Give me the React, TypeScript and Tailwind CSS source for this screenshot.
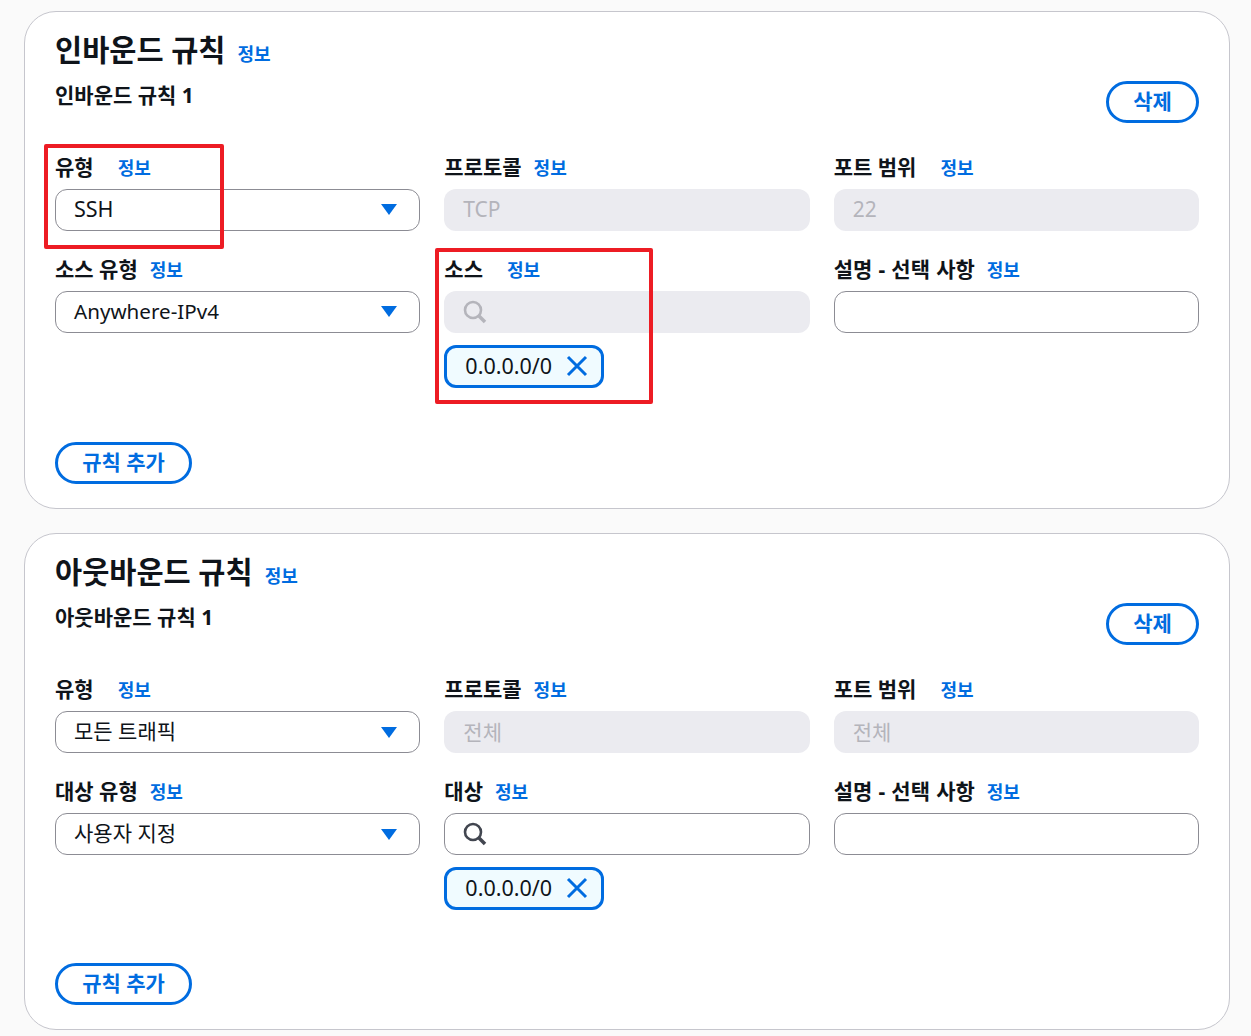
const font = "font-['Noto_Sans','Noto_Sans_CJK_KR',sans-serif]";

function Info() {
  return <a className="text-[18px] leading-[22px] font-semibold text-[#006ce0]">정보</a>;
}

function Label({ text, gap, extra = "" }: { text: string; gap: string; extra?: string }) {
  return (
    <div className={`flex h-[22px] items-center ${gap}`}>
      <span className={`pb-[2px] text-[21px] leading-[22px] font-bold text-[#0f141a] ${extra}`}>{text}</span>
      <Info />
    </div>
  );
}

function SelectBox({ value, size = "text-[21px]" }: { value: string; size?: string }) {
  return (
    <div className={`flex h-[42px] items-center justify-between rounded-[12px] border border-[#8c8c94] bg-white pl-[18px] pr-[21px] text-[#0f141a] ${size}`}>
      <span>{value}</span>
      <svg width="18" height="13" viewBox="0 0 18 13">
        <path d="M1 1h16L9 12z" fill="#006ce0" />
      </svg>
    </div>
  );
}

function DisabledBox({ value, size = "text-[21px] pt-[2px]" }: { value: string; size?: string }) {
  return (
    <div className={`flex h-[42px] items-center rounded-[12px] bg-[#ebebf0] px-[19px] text-[#b4b4bb] ${size}`}>
      {value}
    </div>
  );
}

function SearchIcon() {
  return (
    <svg width="24" height="24" viewBox="0 0 24 24" fill="none" stroke="currentColor" strokeWidth="2.6">
      <circle cx="10" cy="10" r="8" />
      <path d="M15.5 15.5 22 22" strokeWidth="3.6" />
    </svg>
  );
}

function SearchBox({ disabled }: { disabled?: boolean }) {
  return (
    <div
      className={
        disabled
          ? "flex h-[42px] items-center rounded-[12px] bg-[#ebebf0] pl-[19px] text-[#b4b4bb]"
          : "flex h-[42px] items-center rounded-[12px] border border-[#8c8c94] bg-white pl-[18px] text-[#424650]"
      }
    >
      <SearchIcon />
    </div>
  );
}

function Token() {
  return (
    <div className="mt-3 flex h-[43px] w-[160px] items-center rounded-[12px] border-[3px] border-[#006ce0] bg-[#f0fbff] pl-[18px] text-[#0f141a]">
      <span className="pb-[1px] text-[21.5px]">0.0.0.0/0</span>
      <svg width="22" height="22" viewBox="0 0 22 22" className="mb-[2px] ml-[14px]" fill="none" stroke="#006ce0" strokeWidth="3">
        <path d="M2 2l18 18M20 2L2 20" />
      </svg>
    </div>
  );
}

function PillButton({ text, width }: { text: string; width: string }) {
  return (
    <button className={`flex h-[42px] items-center justify-center rounded-full border-[3px] border-[#006ce0] bg-white pb-[1px] text-[21px] font-bold text-[#006ce0] ${width}`}>
      {text}
    </button>
  );
}

function RuleCard(props: {
  title: string;
  subtitle: string;
  typeValue: string;
  typeSize?: string;
  protocol: string;
  port: string;
  disabledSize?: string;
  peerLabel: string;
  peerGap: string;
  peerTypeLabel: string;
  peerTypeValue: string;
  peerTypeSize?: string;
  searchDisabled?: boolean;
  height: string;
  addGap: string;
}) {
  return (
    <section className={`rounded-[32px] border border-[#c6c6cd] bg-white px-[30px] ${props.height}`}>
      <div className="flex h-[60px] items-center gap-[12px] pt-[16px]">
        <h2 className="text-[29.5px] leading-[36px] font-bold text-[#0f141a]">{props.title}</h2>
        <span className="mt-[10px]">
          <Info />
        </span>
      </div>
      <div className="flex h-[85px] items-start justify-between">
        <h3 className="mt-[8px] text-[21px] leading-[30px] font-bold text-[#0f141a]">{props.subtitle}</h3>
        <div className="mt-[9px]">
          <PillButton text="삭제" width="w-[93px]" />
        </div>
      </div>
      <div className="grid grid-cols-3 gap-x-6 gap-y-[28px]">
        <div className="flex flex-col gap-[10px]">
          <Label text="유형" gap="gap-[24px]" />
          <SelectBox value={props.typeValue} size={props.typeSize} />
        </div>
        <div className="flex flex-col gap-[10px]">
          <Label text="프로토콜" gap="gap-[12px]" />
          <DisabledBox value={props.protocol} size={props.disabledSize} />
        </div>
        <div className="flex flex-col gap-[10px]">
          <Label text="포트 범위" gap="gap-[24px]" />
          <DisabledBox value={props.port} size={props.disabledSize} />
        </div>
        <div className="flex flex-col gap-[10px]">
          <Label text={props.peerTypeLabel} gap="gap-[12px]" />
          <SelectBox value={props.peerTypeValue} size={props.peerTypeSize} />
        </div>
        <div className="flex flex-col gap-[10px]">
          <Label text={props.peerLabel} gap={props.peerGap} />
          <div>
            <SearchBox disabled={props.searchDisabled} />
            <Token />
          </div>
        </div>
        <div className="flex flex-col gap-[10px]">
          <Label text="설명 - 선택 사항" gap="gap-[12px]" extra="[word-spacing:0.7px]" />
          <div className="h-[42px] rounded-[12px] border border-[#8c8c94] bg-white" />
        </div>
      </div>
      <div className={props.addGap}>
        <PillButton text="규칙 추가" width="w-[137px]" />
      </div>
    </section>
  );
}

export default function App() {
  return (
    <div className={`relative h-[1036px] w-[1251px] overflow-hidden bg-[#fafafa] pl-[24px] pr-[21px] pt-[11px] ${font}`}>
      <div className="flex flex-col gap-[24px]">
        <RuleCard
          title="인바운드 규칙"
          subtitle="인바운드 규칙 1"
          typeValue="SSH"
          typeSize="text-[21.5px] pb-[2px]"
          protocol="TCP"
          port="22"
          disabledSize="text-[21px]"
          peerTypeLabel="소스 유형"
          peerTypeValue="Anywhere-IPv4"
          peerTypeSize="text-[20.6px] pb-[1px]"
          peerLabel="소스"
          peerGap="gap-[24px]"
          searchDisabled
          height="h-[498px]"
          addGap="mt-[54px]"
        />
        <RuleCard
          title="아웃바운드 규칙"
          subtitle="아웃바운드 규칙 1"
          typeValue="모든 트래픽"
          protocol="전체"
          port="전체"
          peerTypeLabel="대상 유형"
          peerTypeValue="사용자 지정"
          peerLabel="대상"
          peerGap="gap-[12px]"
          height="h-[497px]"
          addGap="mt-[53px]"
        />
      </div>
      {/* red annotation boxes drawn on the screenshot */}
      <div className="absolute left-[44px] top-[144px] h-[105px] w-[180px] rounded-[2px] border-[4px] border-[#ed1c24]" />
      <div className="absolute left-[435px] top-[248px] h-[156px] w-[218px] rounded-[2px] border-[4px] border-[#ed1c24]" />
    </div>
  );
}
